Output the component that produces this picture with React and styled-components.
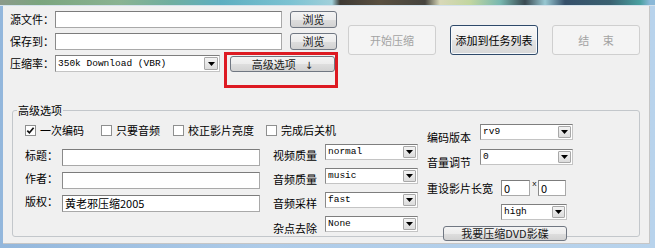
import React from "react";
import styled, { createGlobalStyle } from "styled-components";

const Global = createGlobalStyle`
  html, body { margin: 0; padding: 0; background: #aecbe8; }
  body {
    font-family: "Noto Sans CJK SC", "Noto Sans", sans-serif;
    font-size: 11px;
    line-height: 13px;
    color: #000;
  }
  * { box-sizing: border-box; }
`;

const Window = styled.div`
  position: relative;
  width: 655px;
  height: 248px;
  display: flex;
  flex-direction: column;
  padding: 0 5px 4px 3px;
  background: linear-gradient(90deg, #93b7dc 0%, #aecbe8 40%, #b8d3ec 100%);
  overflow: hidden;
`;

const TitleStrip = styled.div`
  flex: none;
  height: 6px;
  margin: 0 -5px 0 -3px;
  border-bottom: 1px solid #d4e2ec;
  background: linear-gradient(
    90deg,
    #8c9a8a 0px,
    #7ba57e 40px,
    #8ab392 120px,
    #70ae9f 170px,
    #5eaec0 220px,
    #7cc2d2 290px,
    #a0d0da 332px,
    #3e3a34 340px,
    #5a5040 380px,
    #46443e 425px,
    #d8d8b8 440px,
    #c2d6a0 470px,
    #78b8b0 500px,
    #3a4a52 525px,
    #98c8d2 545px,
    #36506a 565px,
    #3a6070 610px,
    #4aa0a0 640px,
    #8ab8d8 650px
  );
`;

const Panel = styled.div`
  flex: 1;
  display: flex;
  flex-direction: column;
  background: #f0f0f0;
  border-right: 1px solid #c6c6c6;
  border-bottom: 1px solid #c6c6c6;
`;

const TopSection = styled.div`
  display: flex;
  align-items: flex-start;
  padding: 5px 0 0 7px;
`;

const FileGrid = styled.div`
  display: grid;
  grid-template-columns: 45px 227px 55px;
  grid-auto-rows: 17px;
  row-gap: 5px;
  align-items: center;
`;

const Label = styled.span`
  white-space: nowrap;
  font-size: 11px;
  line-height: 13px;
  width: ${(p) => (p.$w ? `${p.$w}px` : "auto")};
  flex: none;
  padding-top: ${(p) => p.$drop || 0}px;
`;

const TextBox = styled.div`
  width: ${(p) => p.$w}px;
  height: ${(p) => p.$h || 17}px;
  flex: none;
  background: #fff;
  border: 1px solid #a9a9a9;
  border-top-color: #7c7c7c;
  border-left-color: #8a8a8a;
  padding-left: 2px;
  font-size: 11px;
  line-height: ${(p) => (p.$h || 17) - 2}px;
  white-space: nowrap;
  overflow: hidden;
  justify-self: ${(p) => p.$justify || "stretch"};
`;

const SmallButton = styled.button`
  width: ${(p) => p.$w}px;
  height: ${(p) => p.$h}px;
  flex: none;
  padding: 0;
  margin: 0;
  justify-self: end;
  font-family: "Noto Sans CJK SC", "Noto Sans", sans-serif;
  font-size: 11px;
  line-height: ${(p) => p.$h - 2}px;
  color: #1a1a1a;
  border: 1px solid #707782;
  border-radius: 3px;
  background: linear-gradient(#f4f4f4 0%, #ececec 50%, #dedede 52%, #d2d2d2 100%);
  white-space: nowrap;
`;

const ArrowGlyph = styled.span`
  margin-left: 9px;
  font-family: "DejaVu Sans", sans-serif;
  font-size: 10px;
`;

const ComboRowWrap = styled.div`
  grid-column: 2 / 4;
  display: flex;
  align-items: center;
  gap: 10px;
  height: 17px;
`;

const ComboBox = styled.div`
  width: ${(p) => p.$w}px;
  height: ${(p) => p.$h || 16}px;
  flex: none;
  display: flex;
  background: #fff;
  border: 1px solid #c4c4c4;
  border-top-color: #7e7e7e;
  border-left-color: #8a8a8a;
`;

const ComboText = styled.span`
  flex: 1;
  padding-left: 2px;
  font-family: "Liberation Mono", "DejaVu Sans Mono", monospace;
  font-size: 9.5px;
  line-height: ${(p) => p.$lh}px;
  white-space: pre;
  overflow: hidden;
`;

const ComboArrow = styled.span`
  flex: none;
  width: ${(p) => p.$w || 13}px;
  margin: 1px;
  display: flex;
  align-items: center;
  justify-content: center;
  background: linear-gradient(#f3f3f3, #dcdcdc);
  border: 1px solid #a8a8a8;
  border-radius: 1px;
`;

const ActionButtons = styled.div`
  display: flex;
  gap: 14px;
  margin: 14px 0 0 11px;
`;

const BigButton = styled.button`
  width: 88px;
  height: 30px;
  padding: 0;
  font-family: "Noto Sans CJK SC", "Noto Sans", sans-serif;
  font-size: 11px;
  border-radius: 3px;
  white-space: pre;
  color: ${(p) => (p.$disabled ? "#a3a3a3" : "#000")};
  border: 1px solid ${(p) => (p.$disabled ? "#cfcfcf" : "#2f4a6a")};
  background: ${(p) =>
    p.$disabled
      ? "#f4f4f4"
      : "linear-gradient(#f8f8f8 0%, #efefef 50%, #e2e2e2 52%, #d8d8d8 100%)"};
  box-shadow: ${(p) => (p.$disabled ? "none" : "inset 0 0 0 1px #f6f9fc")};
`;

const GroupBox = styled.fieldset`
  flex: none;
  width: 628px;
  height: 133px;
  margin: 32px 0 0 9px;
  padding: 0 0 0 4px;
  min-width: 0;
  border: 1px solid #c3c7cb;
  border-radius: 3px;
`;

const Legend = styled.legend`
  padding: 0 1px;
  margin: 0;
  font-size: 11px;
  line-height: 13px;
`;

const GroupBody = styled.div`
  display: flex;
  align-items: flex-start;
  padding: 7px 0 0 8px;
`;

const LeftPart = styled.div`
  width: 393px;
  display: flex;
  flex-direction: column;
`;

const CheckRow = styled.div`
  display: flex;
  align-items: center;
  height: 13px;
`;

const CheckItem = styled.label`
  display: flex;
  align-items: center;
  gap: 4px;
  width: ${(p) => (p.$w ? `${p.$w}px` : "auto")};
  flex: none;
  white-space: nowrap;
`;

const Box = styled.span`
  width: 11px;
  height: 11px;
  flex: none;
  display: flex;
  align-items: center;
  justify-content: center;
  background: #fff;
  border: 1px solid #8e8f8f;
`;

const FieldsRow = styled.div`
  display: flex;
  align-items: flex-start;
  gap: 13px;
`;

const MetaCol = styled.div`
  margin-top: 12px;
  display: grid;
  grid-template-columns: 37px 198px;
  grid-auto-rows: 17px;
  row-gap: 6px;
  align-items: start;
`;

const StackCol = styled.div`
  margin-top: ${(p) => p.$top || 0}px;
  display: flex;
  flex-direction: column;
`;

const FieldRow = styled.div`
  display: flex;
  align-items: ${(p) => p.$align || "flex-start"};
  margin-top: ${(p) => p.$gap || 0}px;
  margin-left: ${(p) => p.$indent || 0}px;
`;

const RightCol = styled.div`
  margin-left: 9px;
  display: flex;
  flex-direction: column;
`;

const Times = styled.span`
  width: 8px;
  flex: none;
  align-self: flex-start;
  font-family: "Liberation Mono", monospace;
  font-size: 8px;
  line-height: 8px;
  padding-left: 2px;
`;

const Highlight = styled.div`
  position: absolute;
  left: 224px;
  top: 52px;
  width: 114px;
  height: 36px;
  border: 3px solid #dd1a22;
  pointer-events: none;
`;

const DownTriangle = () => (
  <svg width="7" height="4" viewBox="0 0 7 4">
    <polygon points="0,0 7,0 3.5,4" fill="#000" />
  </svg>
);

const Combo = ({ w, h = 16, value, arrowW }) => (
  <ComboBox $w={w} $h={h}>
    <ComboText $lh={h - 2}>{value}</ComboText>
    <ComboArrow $w={arrowW}>
      <DownTriangle />
    </ComboArrow>
  </ComboBox>
);

const Check = ({ w, checked, children }) => (
  <CheckItem $w={w}>
    <Box>
      {checked && (
        <svg width="9" height="9" viewBox="0 0 9 9">
          <path d="M1.3 4.6 L3.4 6.8 L7.6 1.8" stroke="#111" strokeWidth="1.7" fill="none" />
        </svg>
      )}
    </Box>
    {children}
  </CheckItem>
);

export default function App() {
  return (
    <>
      <Global />
      <Window>
        <TitleStrip />
        <Panel>
          <TopSection>
            <FileGrid>
              <Label>源文件：</Label>
              <TextBox $w={227} />
              <SmallButton $w={47} $h={17}>浏览</SmallButton>

              <Label>保存到：</Label>
              <TextBox $w={227} />
              <SmallButton $w={47} $h={17}>浏览</SmallButton>

              <Label>压缩率：</Label>
              <ComboRowWrap>
                <Combo w={165} h={17} value="350k Download (VBR)" arrowW={14} />
                <SmallButton $w={105} $h={16}>
                  高级选项<ArrowGlyph>↓</ArrowGlyph>
                </SmallButton>
              </ComboRowWrap>
            </FileGrid>
            <ActionButtons>
              <BigButton $disabled>开始压缩</BigButton>
              <BigButton>添加到任务列表</BigButton>
              <BigButton $disabled>{"结　 束"}</BigButton>
            </ActionButtons>
          </TopSection>

          <GroupBox>
            <Legend>高级选项</Legend>
            <GroupBody>
              <LeftPart>
                <CheckRow>
                  <Check w={76} checked>一次编码</Check>
                  <Check w={72}>只要音频</Check>
                  <Check w={93}>校正影片亮度</Check>
                  <Check>完成后关机</Check>
                </CheckRow>
                <FieldsRow>
                  <MetaCol>
                    <Label>标题：</Label>
                    <TextBox $w={198} />
                    <Label>作者：</Label>
                    <TextBox $w={198} />
                    <Label>版权：</Label>
                    <TextBox $w={198}>黄老邪压缩2005</TextBox>
                  </MetaCol>
                  <StackCol $top={7}>
                    <FieldRow>
                      <Label $w={52} $drop={5}>视频质量</Label>
                      <Combo w={93} value="normal" />
                    </FieldRow>
                    <FieldRow $gap={6}>
                      <Label $w={52} $drop={5}>音频质量</Label>
                      <Combo w={93} value="music" />
                    </FieldRow>
                    <FieldRow $gap={6}>
                      <Label $w={52} $drop={5}>音频采样</Label>
                      <Combo w={93} value="fast" />
                    </FieldRow>
                    <FieldRow $gap={6}>
                      <Label $w={52} $drop={6}>杂点去除</Label>
                      <Combo w={93} value="None" />
                    </FieldRow>
                  </StackCol>
                </FieldsRow>
              </LeftPart>

              <RightCol>
                <FieldRow>
                  <Label $w={53} $drop={7}>编码版本</Label>
                  <Combo w={93} value="rv9" />
                </FieldRow>
                <FieldRow $gap={5}>
                  <Label $w={53} $drop={7}>音量调节</Label>
                  <Combo w={93} value="0" />
                </FieldRow>
                <FieldRow $gap={11} $align="center">
                  <Label $w={74}>重设影片长宽</Label>
                  <TextBox $w={29} $h={16}>0</TextBox>
                  <Times>x</Times>
                  <TextBox $w={28} $h={16}>0</TextBox>
                </FieldRow>
                <FieldRow $gap={8} $indent={74}>
                  <Combo w={66} value="high" />
                </FieldRow>
                <FieldRow $gap={6} $indent={16}>
                  <SmallButton $w={124} $h={15}>我要压缩DVD影碟</SmallButton>
                </FieldRow>
              </RightCol>
            </GroupBody>
          </GroupBox>
        </Panel>
        <Highlight />
      </Window>
    </>
  );
}
